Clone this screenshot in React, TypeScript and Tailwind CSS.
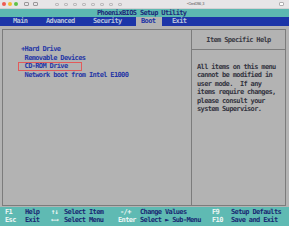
import React from "react";

const mono = "font-['DejaVu_Sans_Mono','Liberation_Mono',monospace] font-bold text-[7px] tracking-[-0.64px] whitespace-pre";

const bootItems = ["+Hard Drive", " Removable Devices", " CD-ROM Drive", " Network boot from Intel E1000"];

const helpLines = [
  "All items on this menu",
  "cannot be modified in",
  "user mode.  If any",
  "items require changes,",
  "please consult your",
  "system Supervisor.",
];

const footer = [
  ["F1", "Help", "↑↓", "Select Item", "-/+", "Change Values", "F9", "Setup Defaults"],
  ["Esc", "Exit", "←→", "Select Menu", "Enter", "Select ► Sub-Menu", "F10", "Save and Exit"],
];

function MacBar() {
  return (
    <div className="h-[9px] bg-[#e7e5e7] border-b border-[#d2d0d2] flex items-center px-[2px]">
      <div className="flex items-center gap-[2px]">
        <span className="w-[4px] h-[4px] rounded-full bg-[#ee5b52]" />
        <span className="w-[4px] h-[4px] rounded-full bg-[#f3bc31]" />
        <span className="w-[4px] h-[4px] rounded-full bg-[#5fc247]" />
      </div>
      <div className="flex items-center gap-[4px] ml-[6px]">
        <span className="w-[5px] h-[4px] border border-[#9a989a] rounded-[1px]" />
        <span className="w-[5px] h-[4px] border border-[#9a989a] rounded-[1px]" />
      </div>
      <div className="flex items-center gap-[5px] ml-[17px] opacity-60">
        {[0, 1, 2, 3, 4, 5, 6, 7].map((i) => (
          <span key={i} className="w-[4px] h-[3px] border border-[#a09ea0] rounded-[1px]" />
        ))}
      </div>
      <span className="ml-[65px] text-[4px] leading-none text-[#8a888a] font-['Liberation_Sans',sans-serif]">▪ CentOS6_3</span>
      <span className="ml-auto mr-[3px] w-[5px] h-[4px] border border-[#b0aeb0] rounded-[1px] bg-white" />
    </div>
  );
}

export default function App() {
  return (
    <div className={`w-[289px] h-[226px] overflow-hidden flex flex-col bg-[#b3b3b3] ${mono}`}>
      <MacBar />

      {/* title */}
      <div className="h-[8px] bg-[#5db8b1] flex items-center pl-[97px] text-[#1b2a78] leading-none">
        PhoenixBIOS Setup Utility
      </div>

      {/* menu */}
      <div className="h-[9px] bg-[#1c35a8] flex items-stretch pl-[13px] text-[#b9c3dc] leading-none">
        <span className="w-[33px] flex items-center">Main</span>
        <span className="w-[47px] flex items-center">Advanced</span>
        <span className="w-[43px] flex items-center">Security</span>
        <span className="w-[26px] flex items-center pl-[5px] bg-[#b3b3b3] text-[#2234a6]">Boot</span>
        <span className="ml-[10px] flex items-center">Exit</span>
      </div>

      {/* body */}
      <div className="flex-1 pt-[3px] pb-[1px] pl-[2px] pr-[3px]">
        <div className="h-full border border-[#7c7c7c] flex">
          <div className="w-[189px] border-r border-[#7c7c7c] pt-[15px] pl-[18px] text-[#2637a6] leading-[8.5px] relative">
            {bootItems.map((t) => (
              <div key={t}>{t}</div>
            ))}
            <div className="absolute left-[15px] top-[32px] w-[64px] h-[9px] border border-[#e25a5a]" />
          </div>
          <div className="flex-1 flex flex-col">
            <div className="h-[20px] border-b border-[#7c7c7c] flex items-center justify-center pt-[1px] text-[#3a3a44] leading-none">
              Item Specific Help
            </div>
            <div className="pt-[13px] pl-[5px] text-[#33333f] leading-[8.4px]">
              {helpLines.map((t) => (
                <div key={t}>{t}</div>
              ))}
            </div>
          </div>
        </div>
      </div>

      {/* footer */}
      <div className="h-[19px] bg-[#5fbab3] pt-[1px] pl-[5px] leading-[8px]">
        {footer.map((r, i) => (
          <div key={i} className="grid grid-cols-[20px_26px_13px_54px_22px_72px_19px_1fr]">
            <span className="text-[#eef6f5]">{r[0]}</span>
            <span className="text-[#1a2a72]">{r[1]}</span>
            <span className="text-[#eef6f5]">{r[2]}</span>
            <span className="text-[#1a2a72]">{r[3]}</span>
            <span className={`text-[#eef6f5] ${i === 0 ? "pl-[2px]" : ""}`}>{r[4]}</span>
            <span className="text-[#1a2a72]">{r[5]}</span>
            <span className="text-[#eef6f5]">{r[6]}</span>
            <span className="text-[#1a2a72]">{r[7]}</span>
          </div>
        ))}
      </div>
    </div>
  );
}
